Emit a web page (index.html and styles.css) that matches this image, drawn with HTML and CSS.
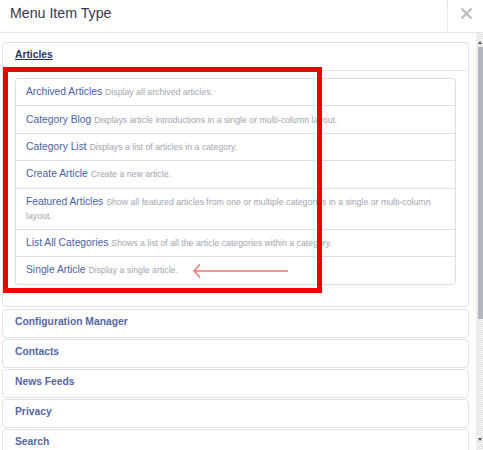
FILE: index.html
```html
<!DOCTYPE html>
<html>
<head>
<meta charset="utf-8">
<link rel="stylesheet" href="styles.css">
</head>
<body>
<div class="dialog">
  <header class="head">
    <h3 class="title">Menu Item Type</h3>
    <div class="close">
      <svg width="13" height="13" viewBox="0 0 13 13"><path d="M1.5 1.5 L11.5 11.5 M11.5 1.5 L1.5 11.5" stroke="#bcbcbc" stroke-width="2.2" fill="none"/></svg>
    </div>
  </header>
  <div class="body">
    <div class="content">
      <div class="panel">
        <div class="panel-head"><a class="cur">Articles</a></div>
        <div class="panel-body">
          <ul class="list">
            <li><a>Archived Articles</a> <small>Display all archived articles.</small></li>
            <li><a>Category Blog</a> <small>Displays article introductions in a single or multi-column layout.</small></li>
            <li><a>Category List</a> <small>Displays a list of articles in a category.</small></li>
            <li><a>Create Article</a> <small>Create a new article.</small></li>
            <li><a>Featured Articles</a> <small>Show all featured articles from one or multiple categories in a single or multi-column layout.</small></li>
            <li><a>List All Categories</a> <small>Shows a list of all the article categories within a category.</small></li>
            <li><a>Single Article</a> <small>Display a single article.</small></li>
          </ul>
        </div>
      </div>
      <div class="panel closed"><div class="panel-head"><a>Configuration Manager</a></div></div>
      <div class="panel closed"><div class="panel-head"><a>Contacts</a></div></div>
      <div class="panel closed"><div class="panel-head"><a>News Feeds</a></div></div>
      <div class="panel closed"><div class="panel-head"><a>Privacy</a></div></div>
      <div class="panel closed"><div class="panel-head"><a>Search</a></div></div>
    </div>
    <div class="scrollbar">
      <span class="arrow up"></span>
      <div class="thumb"></div>
      <span class="arrow down"></span>
    </div>
  </div>
  <div class="annot-box"></div>
  <svg class="annot-arrow" width="100" height="16" viewBox="0 0 100 16">
    <path d="M7 1.5 L1 8 L7 14.5" stroke="#ee7474" stroke-width="1.5" fill="none"/>
    <path d="M1.5 8 L95 8" stroke="#ee7474" stroke-width="1.6" fill="none"/>
  </svg>
</div>
</body>
</html>
```
FILE: styles.css
```css
* { box-sizing: border-box; }
html, body { margin: 0; padding: 0; background: #fff; }
body { width: 483px; height: 450px; overflow: hidden; font-family: "Liberation Sans", Arial, sans-serif; }

.dialog { position: relative; width: 483px; height: 450px; display: flex; flex-direction: column; }

.head { height: 33px; border-bottom: 1px solid #e6e6e6; display: flex; justify-content: space-between; align-items: flex-start; flex: none; }
.title { margin: 0; padding-left: 10px; font-size: 14.2px; line-height: 26px; font-weight: normal; color: #2f3b4e; }
.close { width: 36px; height: 32px; border-left: 1px dotted #dcdcdc; display: flex; justify-content: center; padding-top: 7px; padding-left: 2px; }

.body { flex: 1; display: flex; min-height: 0; }
.content { width: 476px; padding: 9px 7px 0 2px; overflow: hidden; }

.panel { border: 1px solid #e2e2e2; border-radius: 4px; margin-bottom: 2px; background: #fff; }
.panel.closed { margin-bottom: 1px; }
.panel-head { padding: 0 12px 3px; line-height: 24px; font-size: 10.3px; font-weight: bold; }
.panel-head a { color: #5466a6; }
.panel-head a.cur { color: #27365e; text-decoration: underline; }
.panel .panel-head:not(:last-child) { border-bottom: 1px solid #e8e8e8; }
.panel-body { padding: 7px 12px 21px; }

.list { list-style: none; margin: 0; padding: 0; border: 1px solid #dedede; border-radius: 3px; }
.list li { padding: 6.2px 10px 6.2px 10px; line-height: 14px; font-size: 10.3px; border-bottom: 1px solid #e0e0e0; }
.list li:last-child { border-bottom: none; }
.list a { color: #4a5fa3; }
.list small { font-size: 8.75px; color: #a3a4ae; }

.scrollbar { width: 7px; display: flex; flex-direction: column; align-items: flex-end; background-color: #fff; background-image: repeating-conic-gradient(#dcdcdc 0 25%, #fff 0 50%); background-size: 2px 2px; }
.thumb { width: 5px; height: 272px; background: #b2b6be; margin-top: 3px; }
.arrow { width: 0; height: 0; border-left: 2px solid transparent; border-right: 2px solid transparent; margin-right: 1px; }
.arrow.up { border-bottom: 3px solid #555; margin-top: 8px; }
.arrow.down { border-top: 3px solid #555; margin-top: auto; margin-bottom: 9px; }

.annot-box { position: absolute; left: 3px; top: 67px; width: 319px; height: 226px; border: 5px solid #ec0000; }
.annot-arrow { position: absolute; left: 193px; top: 263px; }
```
